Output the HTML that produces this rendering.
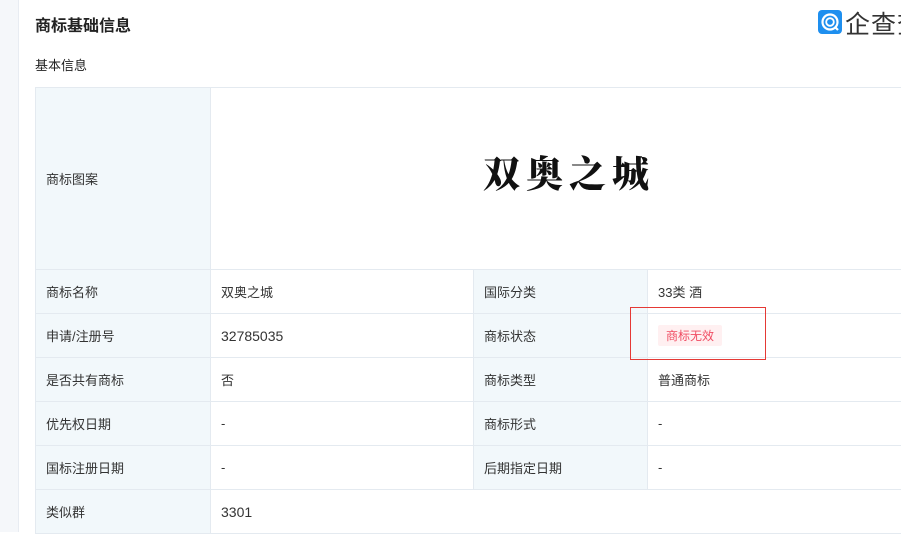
<!DOCTYPE html>
<html><head><meta charset="utf-8"><style>
*{margin:0;padding:0;box-sizing:border-box}
body{width:901px;height:532px;overflow:hidden;background:#fff;font-family:"Liberation Sans","Noto Sans CJK SC",sans-serif;color:#333;position:relative}
.side{position:absolute;left:0;top:0;width:19px;height:532px;background:#f5f7fa;border-right:1px solid #e8ecf2}
.title{position:absolute;left:35px;top:12px;font-size:16px;font-weight:bold;color:#222}
.sub{position:absolute;left:35px;top:55px;font-size:13px;color:#222}
.logo{position:absolute;left:818px;top:10px;width:24px;height:24px;background:#1e8fef;border-radius:4px}
.logot{position:absolute;left:845px;top:5px;font-size:25px;color:#333;white-space:nowrap;letter-spacing:1px}
table{position:absolute;left:35px;top:87px;border-collapse:collapse;table-layout:fixed;width:900px}
td{border:1px solid #e4eaf0;font-size:13px;padding:0 10px;height:44px;vertical-align:middle}
td.k{background:#f2f8fb}
.img{height:182px;text-align:center;padding-left:0;padding-right:8px}
.img span{font-family:"Noto Serif CJK SC",serif;font-weight:900;font-size:37px;letter-spacing:6px;color:#111;position:relative;top:-8px}
.num{font-size:14px}
.badge{display:inline-block;background:#fff0f1;color:#f04d63;font-size:12px;padding:2px 8px;border-radius:2px}
.rbox{position:absolute;left:630px;top:307px;width:136px;height:53px;border:1px solid #e53935}
</style></head><body>
<div class="side"></div>
<div class="title">商标基础信息</div>
<div class="sub">基本信息</div>
<div class="logo"><svg width="24" height="24" viewBox="0 0 24 24"><circle cx="12" cy="12" r="7.5" fill="none" stroke="#fff" stroke-width="2.2"/><circle cx="12" cy="12" r="3.8" fill="none" stroke="#fff" stroke-width="1.8"/><path d="M17 17 L20 20" stroke="#fff" stroke-width="2.2"/></svg></div>
<div class="logot">企查查</div>
<table>
<colgroup><col style="width:175px"><col style="width:263px"><col style="width:174px"><col style="width:288px"></colgroup>
<tr><td class="k">商标图案</td><td colspan="3" class="img"><span>双奥之城</span></td></tr>
<tr><td class="k">商标名称</td><td>双奥之城</td><td class="k">国际分类</td><td>33类 酒</td></tr>
<tr><td class="k">申请/注册号</td><td class="num">32785035</td><td class="k">商标状态</td><td><span class="badge">商标无效</span></td></tr>
<tr><td class="k">是否共有商标</td><td>否</td><td class="k">商标类型</td><td>普通商标</td></tr>
<tr><td class="k">优先权日期</td><td>-</td><td class="k">商标形式</td><td>-</td></tr>
<tr><td class="k">国标注册日期</td><td>-</td><td class="k">后期指定日期</td><td>-</td></tr>
<tr><td class="k">类似群</td><td colspan="3" class="num">3301</td></tr>
</table>
<div class="rbox"></div>
</body></html>
